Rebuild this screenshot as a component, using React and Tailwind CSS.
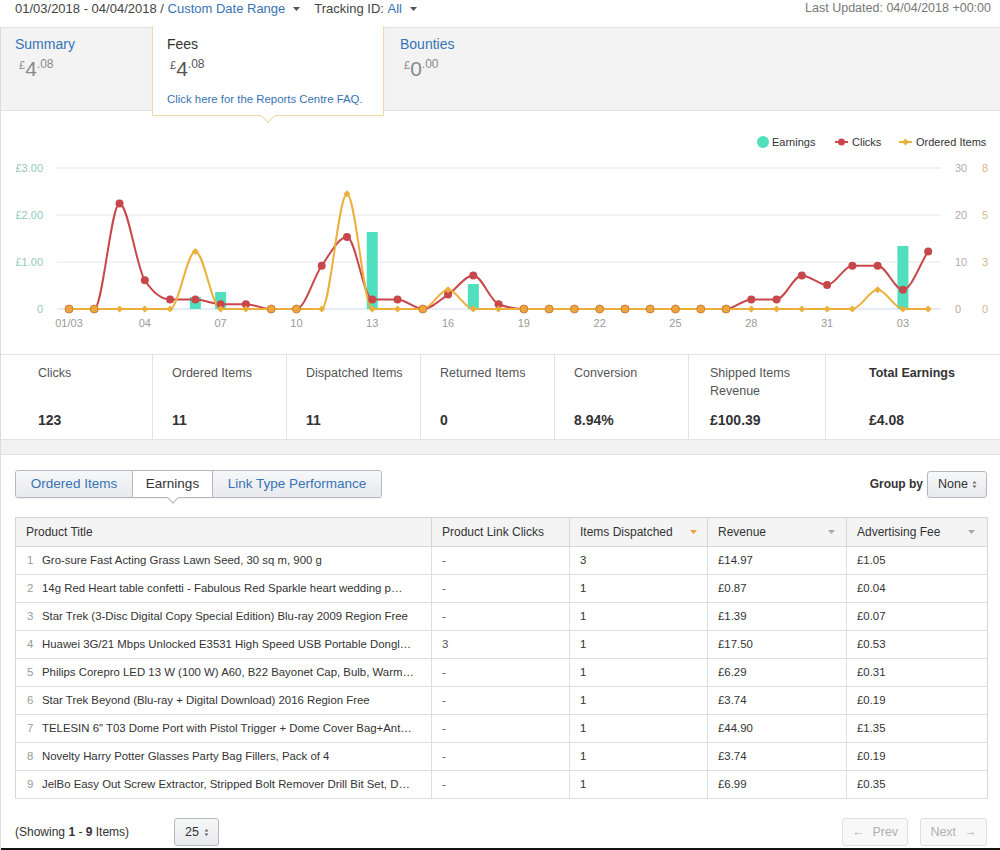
import React from "react";

const FONT = "font-['Liberation_Sans',Arial,sans-serif]";

function Caret({ color = "#555" }) {
  return (
    <svg width="7" height="4" viewBox="0 0 7 4" className="inline-block">
      <path d="M0 0h7L3.5 4z" fill={color} />
    </svg>
  );
}

function UpDown() {
  return (
    <svg width="5" height="9" viewBox="0 0 5 9" className="inline-block">
      <path d="M0.5 3.5L2.5 1L4.5 3.5z M0.5 5.5L2.5 8L4.5 5.5z" fill="#666" />
    </svg>
  );
}

function Amount({ dark, whole = "4", frac = ".08" }) {
  return (
    <div className={`flex items-start h-[24px] ${dark ? "text-[#555]" : "text-[#8a8a8a]"}`}>
      <span className="text-[11px] leading-[14px] mt-[1px]">£</span>
      <span className="text-[21px] leading-[24px]">{whole}</span>
      <span className="text-[12px] leading-[14px]">{frac}</span>
    </div>
  );
}

function monotone(pts) {
  const n = pts.length;
  const s = [];
  for (let i = 0; i < n - 1; i++) s.push((pts[i + 1][1] - pts[i][1]) / (pts[i + 1][0] - pts[i][0]));
  const m = [];
  for (let i = 0; i < n; i++) {
    if (i === 0) m.push(s[0]);
    else if (i === n - 1) m.push(s[n - 2]);
    else {
      const a = s[i - 1], b = s[i];
      if (a * b <= 0) m.push(0);
      else {
        const p = (a + b) / 2;
        m.push((Math.sign(a) + Math.sign(b)) * Math.min(Math.abs(a), Math.abs(b), 0.5 * Math.abs(p)));
      }
    }
  }
  let d = `M${pts[0][0]},${pts[0][1]}`;
  for (let i = 0; i < n - 1; i++) {
    const [x0, y0] = pts[i];
    const [x1, y1] = pts[i + 1];
    const h = (x1 - x0) / 3;
    d += ` C${x0 + h},${y0 + m[i] * h} ${x1 - h},${y1 - m[i + 1] * h} ${x1},${y1}`;
  }
  return d;
}

function Chart() {
  const X0 = 68, DX = 25.27, BASE = 309;
  const x = (i) => X0 + i * DX;
  const clicks = [0, 0, 22, 6, 2, 2, 1, 1, 0, 0, 9, 15, 2, 2, 0, 3, 7, 1, 0, 0, 0, 0, 0, 0, 0, 0, 0, 2, 2, 7, 5, 9, 9, 4, 12];
  const ordered = clicks.map(() => 0);
  ordered[5] = 3; ordered[11] = 6; ordered[15] = 1; ordered[32] = 1;
  const cp = clicks.map((v, i) => [x(i), BASE - v * 4.8]);
  const op = ordered.map((v, i) => [x(i), BASE - v * 19.2]);
  const bars = [[5, 12], [6, 17], [12, 77], [16, 25], [33, 63]];
  const grid = [168, 215, 262];
  const xl = [[0, "01/03"], [3, "04"], [6, "07"], [9, "10"], [12, "13"], [15, "16"], [18, "19"], [21, "22"], [24, "25"], [27, "28"], [30, "31"], [33, "03"]];
  const left = [[168, "£3.00"], [215, "£2.00"], [262, "£1.00"], [309, "0"]];
  const r1 = [[168, "30"], [215, "20"], [262, "10"], [309, "0"]];
  const r2 = [[168, "8"], [215, "5"], [262, "3"], [309, "0"]];
  const ff = "'Liberation Sans', Arial, sans-serif";
  const dia = (cx, cy, r) => `${cx},${cy - r} ${cx + r},${cy} ${cx},${cy + r} ${cx - r},${cy}`;
  return (
    <svg width="1000" height="243" viewBox="0 111 1000 243" className="block" style={{ fontFamily: ff }}>
      {grid.map((g) => (
        <line key={g} x1="56" x2="940" y1={g} y2={g} stroke="#e6e6e6" strokeWidth="1" />
      ))}
      <line x1="56" x2="940" y1={BASE} y2={BASE} stroke="#ccd6eb" strokeWidth="1" />
      {left.map(([y, t]) => (
        <text key={t} x="42" y={y + 4} textAnchor="end" fontSize="11" fill="#93cbbb">{t}</text>
      ))}
      {r1.map(([y, t]) => (
        <text key={t} x="954" y={y + 4} fontSize="11" fill="#bca9a9">{t}</text>
      ))}
      {r2.map(([y, t]) => (
        <text key={t} x="981" y={y + 4} fontSize="11" fill="#d3b98c">{t}</text>
      ))}
      {xl.map(([i, t]) => (
        <text key={t} x={x(i)} y="327" textAnchor="middle" fontSize="11" fill="#9a9a9a">{t}</text>
      ))}
      {bars.map(([i, h]) => (
        <rect key={i} x={x(i) - 5.5} y={BASE - h} width="11" height={h} fill="#50e0be" />
      ))}
      <path d={monotone(cp)} fill="none" stroke="#c8474b" strokeWidth="2" />
      <path d={monotone(op)} fill="none" stroke="#ebb03c" strokeWidth="2" />
      {cp.map(([cx, cy], i) =>
        clicks[i] !== 0 ? <circle key={"c" + i} cx={cx} cy={cy} r="4" fill="#c8474b" /> : null
      )}
      {op.map(([cx, cy], i) =>
        clicks[i] !== 0 || ordered[i] !== 0 ? (
          <polygon key={"o" + i} points={dia(cx, cy, 3.5)} fill="#ebb03c" />
        ) : null
      )}
      {cp.map(([cx, cy], i) =>
        clicks[i] === 0 ? (
          <circle key={"z" + i} cx={cx} cy={cy} r="4" fill="#eca63b" stroke="#cf7a3c" strokeWidth="1" />
        ) : null
      )}
      <circle cx="762" cy="142" r="6" fill="#50e0be" />
      <text x="771" y="146" fontSize="11" fill="#333">Earnings</text>
      <line x1="834" x2="847" y1="142" y2="142" stroke="#c8474b" strokeWidth="2" />
      <circle cx="840.5" cy="142" r="3.5" fill="#c8474b" />
      <text x="851" y="146" fontSize="11" fill="#333">Clicks</text>
      <line x1="898" x2="911" y1="142" y2="142" stroke="#ebb03c" strokeWidth="2" />
      <polygon points={dia(904.5, 142, 3.5)} fill="#ebb03c" />
      <text x="915" y="146" fontSize="11" fill="#333">Ordered Items</text>
    </svg>
  );
}

const stats = [
  { label: "Clicks", value: "123", cls: "w-[151px] pl-[37px]" },
  { label: "Ordered Items", value: "11", cls: "w-[134px] pl-[19px] border-l border-[#e3e3e3]" },
  { label: "Dispatched Items", value: "11", cls: "w-[134px] pl-[19px] border-l border-[#e3e3e3]" },
  { label: "Returned Items", value: "0", cls: "w-[134px] pl-[19px] border-l border-[#e3e3e3]" },
  { label: "Conversion", value: "8.94%", cls: "w-[134px] pl-[19px] border-l border-[#e3e3e3]" },
  { label: "Shipped Items|Revenue", value: "£100.39", cls: "w-[137px] pl-[21px] border-l border-[#e3e3e3]" },
  { label: "Total Earnings", value: "£4.08", cls: "flex-1 pl-[43px] border-l border-[#e3e3e3]", bold: true },
];

const rows = [
  ["Gro-sure Fast Acting Grass Lawn Seed, 30 sq m, 900 g", "-", "3", "£14.97", "£1.05"],
  ["14g Red Heart table confetti - Fabulous Red Sparkle heart wedding p…", "-", "1", "£0.87", "£0.04"],
  ["Star Trek (3-Disc Digital Copy Special Edition) Blu-ray 2009 Region Free", "-", "1", "£1.39", "£0.07"],
  ["Huawei 3G/21 Mbps Unlocked E3531 High Speed USB Portable Dongl…", "3", "1", "£17.50", "£0.53"],
  ["Philips Corepro LED 13 W (100 W) A60, B22 Bayonet Cap, Bulb, Warm…", "-", "1", "£6.29", "£0.31"],
  ["Star Trek Beyond (Blu-ray + Digital Download) 2016 Region Free", "-", "1", "£3.74", "£0.19"],
  ["TELESIN 6\" T03 Dome Port with Pistol Trigger + Dome Cover Bag+Ant…", "-", "1", "£44.90", "£1.35"],
  ["Novelty Harry Potter Glasses Party Bag Fillers, Pack of 4", "-", "1", "£3.74", "£0.19"],
  ["JelBo Easy Out Screw Extractor, Stripped Bolt Remover Drill Bit Set, D…", "-", "1", "£6.99", "£0.35"],
];

export default function App() {
  return (
    <div className={`${FONT} w-[1000px] h-[850px] overflow-hidden bg-white flex flex-col text-[#333]`}>
      <div className="h-[27px] shrink-0 flex items-start justify-between pl-[15px] pr-[9px]">
        <div className="flex items-center text-[13px] leading-[17px] text-[#444]">
          <span>01/03/2018 - 04/04/2018 /&nbsp;</span>
          <span className="text-[#3773b5]">Custom Date Range</span>
          <span className="ml-[8px] mr-[14px] flex items-center"><Caret /></span>
          <span>Tracking ID:&nbsp;</span>
          <span className="text-[#3773b5]">All</span>
          <span className="ml-[8px] flex items-center"><Caret /></span>
        </div>
        <div className="text-[12.5px] leading-[17px] text-[#777]">Last Updated: 04/04/2018 +00:00</div>
      </div>

      <div className="flex-1 flex flex-col border-l border-[#dcdcdc]">
        <div className="h-[84px] shrink-0 flex bg-[#f3f3f3] border-y border-[#e2e2e2]">
          <div className="w-[151px] pl-[14px] pt-[7px]">
            <div className="text-[14px] leading-[18px] text-[#3773b5]">Summary</div>
            <div className="mt-[4px] ml-[4px]"><Amount /></div>
          </div>
          <div className="relative z-10 w-[232px] h-[90px] -mt-[2px] shrink-0 self-start bg-white border border-t-0 border-[#f0d9a9] pl-[14px] pt-[9px] shadow-[0_1px_2px_rgba(0,0,0,0.04)]">
            <div className="text-[14px] leading-[18px] text-[#333]">Fees</div>
            <div className="mt-[4px] ml-[3px]"><Amount dark /></div>
            <div className="mt-[10px] text-[11.4px] leading-[16px] text-[#3773b5]">Click here for the Reports Centre FAQ.</div>
            <div className="absolute left-1/2 -bottom-[6px] -translate-x-1/2 w-[10px] h-[10px] rotate-45 bg-white border-r border-b border-[#f0d9a9]" />
          </div>
          <div className="pl-[16px] pt-[7px]">
            <div className="text-[14px] leading-[18px] text-[#3773b5]">Bounties</div>
            <div className="mt-[4px] ml-[4px]"><Amount whole="0" frac=".00" /></div>
          </div>
        </div>

        <div className="shrink-0 bg-white">
          <Chart />
        </div>

        <div className="h-[86px] shrink-0 flex border-y border-[#e3e3e3] bg-white">
          {stats.map((s) => (
            <div key={s.label} className={`${s.cls} flex flex-col justify-between pt-[9px] pb-[10px]`}>
              <div className={`text-[12.5px] leading-[18px] ${s.bold ? "font-bold text-[#333]" : "text-[#555]"}`}>
                {s.label.split("|").map((l, i) => (
                  <div key={i}>{l}</div>
                ))}
              </div>
              <div className="text-[14px] leading-[18px] font-bold text-[#333]">{s.value}</div>
            </div>
          ))}
        </div>

        <div className="h-[14px] shrink-0 bg-[#f2f2f2]" />

        <div className="flex-1 flex flex-col bg-white border-t border-[#e2e2e2] pt-[15px]">
          <div className="flex items-center justify-between pl-[14px] pr-[13px] h-[28px]">
            <div className="flex h-[28px] rounded-[3px] border border-[#b5b9bf] text-[13.5px] shadow-[0_1px_0_rgba(0,0,0,0.05)]">
              <div className="w-[116px] flex items-center justify-center rounded-l-[3px] bg-linear-to-b from-[#f7f8fa] to-[#e7e9ec] text-[#3773b5]">Ordered Items</div>
              <div className="relative w-[81px] flex items-center justify-center bg-white border-x border-[#b5b9bf] text-[#333]">
                Earnings
                <div className="absolute left-1/2 -bottom-[5px] -translate-x-1/2 w-[8px] h-[8px] rotate-45 bg-white border-r border-b border-[#b5b9bf]" />
              </div>
              <div className="w-[168px] flex items-center justify-center rounded-r-[3px] bg-linear-to-b from-[#f7f8fa] to-[#e7e9ec] text-[#3773b5]">Link Type Performance</div>
            </div>
            <div className="flex items-center">
              <span className="text-[12px] font-bold text-[#333] mr-[4px]">Group by</span>
              <div className="w-[60px] h-[27px] flex items-center justify-between pl-[10px] pr-[9px] rounded-[3px] border border-[#b5b9bf] bg-linear-to-b from-[#f7f8fa] to-[#e7e9ec] text-[12.5px] text-[#333]">
                <span>None</span>
                <UpDown />
              </div>
            </div>
          </div>

          <div className="pl-[14px] mt-[19px]">
            <table className="w-[972px] table-fixed border-collapse border border-[#d6d6d6] text-[11.4px]">
              <colgroup>
                <col className="w-[416px]" />
                <col className="w-[138px]" />
                <col className="w-[138px]" />
                <col className="w-[139px]" />
                <col className="w-[141px]" />
              </colgroup>
              <thead>
                <tr className="h-[29px] bg-[#f4f4f4] text-[#333] text-[12px]">
                  <th className="font-normal text-left px-[10px] border-r border-b border-[#d6d6d6]">Product Title</th>
                  <th className="font-normal text-left px-[10px] border-r border-b border-[#d6d6d6]">Product Link Clicks</th>
                  <th className="font-normal text-left pl-[10px] pr-[10px] border-r border-b border-[#d6d6d6]">
                    <div className="flex items-center justify-between"><span>Items Dispatched</span><Caret color="#e9a23b" /></div>
                  </th>
                  <th className="font-normal text-left pl-[10px] pr-[11px] border-r border-b border-[#d6d6d6]">
                    <div className="flex items-center justify-between"><span>Revenue</span><Caret color="#a8a8a8" /></div>
                  </th>
                  <th className="font-normal text-left pl-[10px] pr-[12px] border-b border-[#d6d6d6]">
                    <div className="flex items-center justify-between"><span>Advertising Fee</span><Caret color="#a8a8a8" /></div>
                  </th>
                </tr>
              </thead>
              <tbody>
                {rows.map((r, i) => (
                  <tr key={i} className="h-[28px] text-[#333]">
                    <td className="pl-[10px] pr-[6px] border-r border-b border-[#dedede] whitespace-nowrap overflow-hidden">
                      <div className="flex">
                        <span className="w-[16px] shrink-0 pl-[1px] text-[#9a9a9a]">{i + 1}</span>
                        <span className="overflow-hidden whitespace-nowrap">{r[0]}</span>
                      </div>
                    </td>
                    <td className="px-[10px] border-r border-b border-[#dedede] text-[#555]">{r[1]}</td>
                    <td className="px-[10px] border-r border-b border-[#dedede]">{r[2]}</td>
                    <td className="px-[10px] border-r border-b border-[#dedede]">{r[3]}</td>
                    <td className="px-[10px] border-b border-[#dedede]">{r[4]}</td>
                  </tr>
                ))}
              </tbody>
            </table>
          </div>

          <div className="mt-[19px] h-[28px] flex items-center pl-[14px] pr-[13px]">
            <div className="w-[159px] text-[12px] text-[#333]">
              (Showing <b>1</b> - <b>9</b> Items)
            </div>
            <div className="w-[45px] h-[28px] flex items-center justify-between pl-[10px] pr-[9px] rounded-[3px] border border-[#b5b9bf] bg-linear-to-b from-[#f7f8fa] to-[#e7e9ec] text-[12.5px] text-[#333]">
              <span>25</span>
              <UpDown />
            </div>
            <div className="ml-auto flex gap-[12px]">
              <div className="w-[66px] h-[28px] flex items-center justify-center gap-[8px] rounded-[3px] border border-[#e0e0e0] bg-[#f8f8f8] text-[12.5px] text-[#b0b0b0]">
                <span>←</span><span>Prev</span>
              </div>
              <div className="w-[67px] h-[28px] flex items-center justify-center gap-[8px] rounded-[3px] border border-[#e0e0e0] bg-[#f8f8f8] text-[12.5px] text-[#b0b0b0]">
                <span>Next</span><span>→</span>
              </div>
            </div>
          </div>
          <div className="mt-auto h-[2px] bg-[#151515]" />
        </div>
      </div>
    </div>
  );
}
